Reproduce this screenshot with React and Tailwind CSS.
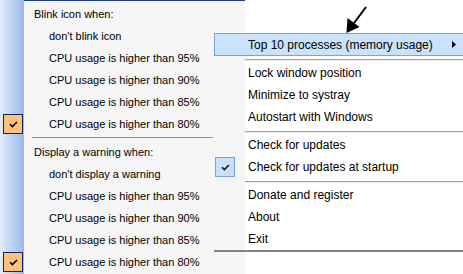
import React from "react";

const Check = ({ color = "#000" }) => (
  <svg width="9" height="7" viewBox="0 0 9 7">
    <path d="M1 3.2 L3.4 5.6 L8 1" fill="none" stroke={color} strokeWidth="1.6" />
  </svg>
);

// one row of the left (Office style) menu: blue gradient strip + text
const LeftRow = ({ children, checked, header }) => (
  <div className="flex h-[22px]">
    <div className="w-[24px] shrink-0 flex items-center pl-[3px] bg-linear-to-r from-[#e2edfd] to-[#9bb8ea]">
      {checked && (
        <div className="w-[20px] h-[20px] flex items-center justify-center bg-[#ffc27e] border border-[#0a246a]">
          <Check />
        </div>
      )}
    </div>
    <div className={`flex-1 flex items-center bg-[#f6f6f6] ${header ? "pl-[10px]" : "pl-[25px]"}`}>
      {children}
    </div>
  </div>
);

const LeftSeparator = () => (
  <div className="flex h-[6px]">
    <div className="w-[24px] shrink-0 bg-linear-to-r from-[#e2edfd] to-[#9bb8ea]" />
    <div className="flex-1 bg-[#f6f6f6] pt-[2px]">
      <div className="ml-[8px] w-[181px] h-px bg-[#7397d8]" />
    </div>
  </div>
);

// one row of the right (classic) context menu
const RightRow = ({ children, checked }) => (
  <div className="flex h-[22px]">
    <div className="w-[31px] shrink-0 flex items-center pl-[1px] bg-[#f5f5f5]">
      {checked && (
        <div className="w-[20px] h-[20px] flex items-center justify-center bg-[#c9e0fa] border border-[#77a3dc]">
          <Check color="#1a1a1a" />
        </div>
      )}
    </div>
    <div className="flex-1 flex items-center pl-[3px]">{children}</div>
  </div>
);

const RightSeparator = () => (
  <div className="flex h-[6px]">
    <div className="w-[31px] shrink-0 bg-[#f5f5f5]" />
    <div className="flex-1 pt-[3px]">
      <div className="h-px bg-[#a3a3a3]" />
      <div className="h-px bg-[#f0f0f0]" />
    </div>
  </div>
);

const App = () => {
  return (
    <div className="relative w-[463px] h-[274px] overflow-hidden bg-white text-black font-['Liberation_Sans',Arial,sans-serif]">
      {/* Left menu */}
      <div className="w-[245px] h-full flex flex-col text-[11px]">
        <div className="flex h-[3px]">
          <div className="w-[24px] shrink-0 bg-linear-to-r from-[#e2edfd] to-[#9bb8ea]" />
          <div className="flex-1 bg-[#f6f6f6] border-t border-[#1b3a92]" />
        </div>
        <LeftRow header>Blink icon when:</LeftRow>
        <LeftRow>don't blink icon</LeftRow>
        <LeftRow>CPU usage is higher than 95%</LeftRow>
        <LeftRow>CPU usage is higher than 90%</LeftRow>
        <LeftRow>CPU usage is higher than 85%</LeftRow>
        <LeftRow checked>CPU usage is higher than 80%</LeftRow>
        <LeftSeparator />
        <LeftRow header>Display a warning when:</LeftRow>
        <LeftRow>don't display a warning</LeftRow>
        <LeftRow>CPU usage is higher than 95%</LeftRow>
        <LeftRow>CPU usage is higher than 90%</LeftRow>
        <LeftRow>CPU usage is higher than 85%</LeftRow>
        <LeftRow checked>CPU usage is higher than 80%</LeftRow>
        <div className="flex flex-1">
          <div className="w-[24px] shrink-0 bg-linear-to-r from-[#e2edfd] to-[#9bb8ea]" />
          <div className="flex-1 bg-[#f6f6f6]" />
        </div>
      </div>

      {/* Context menu on top */}
      <div className="absolute left-[214px] top-[33px] w-[252px] bg-white border-b-2 border-[#838383] text-[12px]">
        <div className="h-[23px] flex items-center bg-[#cbe2fb] border border-[#7aa5dc] pl-[33px] pr-[9px]">
          <span>Top 10 processes (memory usage)</span>
          <svg className="ml-auto" width="4" height="7" viewBox="0 0 4 7">
            <path d="M0 0 L4 3.5 L0 7 Z" fill="#000" />
          </svg>
        </div>
        <RightSeparator />
        <RightRow>Lock window position</RightRow>
        <RightRow>Minimize to systray</RightRow>
        <RightRow>Autostart with Windows</RightRow>
        <RightSeparator />
        <RightRow>Check for updates</RightRow>
        <RightRow checked>Check for updates at startup</RightRow>
        <RightSeparator />
        <RightRow>Donate and register</RightRow>
        <RightRow>About</RightRow>
        <RightRow>Exit</RightRow>
      </div>

      {/* pointer arrow */}
      <svg className="absolute left-0 top-0" width="463" height="274" viewBox="0 0 463 274">
        <line x1="366" y1="7" x2="354" y2="23" stroke="#000" strokeWidth="2" />
        <path d="M346.5 33 L347.5 18 L359.5 27 Z" fill="#000" />
      </svg>
    </div>
  );
};

export default App;
